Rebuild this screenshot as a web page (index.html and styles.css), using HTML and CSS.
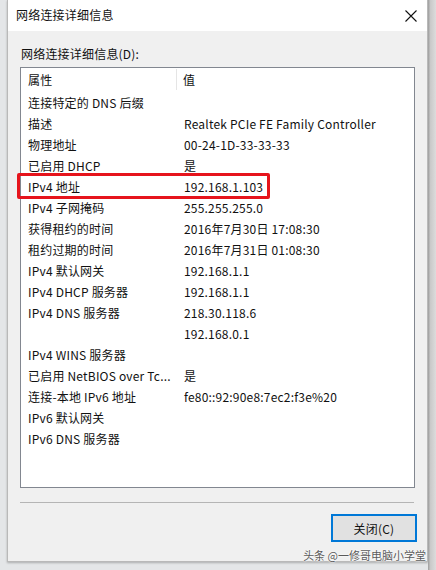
FILE: index.html
```html
<!DOCTYPE html>
<html lang="zh-CN">
<head>
<meta charset="utf-8">
<title>网络连接详细信息</title>
<link rel="stylesheet" href="styles.css">
</head>
<body>
<div class="desk">
  <div class="dialog">
    <div class="titlebar">
      <span class="title">网络连接详细信息</span>
      <svg class="close" width="12" height="12" viewBox="0 0 12 12"><path d="M0.5 0.5 L11.5 11.5 M11.5 0.5 L0.5 11.5" stroke="#111" stroke-width="1.1" fill="none"/></svg>
    </div>
    <div class="content">
      <div class="label">网络连接详细信息(D):</div>
      <div class="list">
        <div class="head">
          <div class="hcell c1">属性</div>
          <div class="hcell c2">值</div>
        </div>
        <div class="row"><span class="c1">连接特定的 DNS 后缀</span><span class="c2"></span></div>
        <div class="row"><span class="c1">描述</span><span class="c2">Realtek PCIe FE Family Controller</span></div>
        <div class="row"><span class="c1">物理地址</span><span class="c2">00-24-1D-33-33-33</span></div>
        <div class="row"><span class="c1">已启用 DHCP</span><span class="c2">是</span></div>
        <div class="row"><span class="c1">IPv4 地址</span><span class="c2">192.168.1.103</span></div>
        <div class="row"><span class="c1">IPv4 子网掩码</span><span class="c2">255.255.255.0</span></div>
        <div class="row"><span class="c1">获得租约的时间</span><span class="c2">2016年7月30日 17:08:30</span></div>
        <div class="row"><span class="c1">租约过期的时间</span><span class="c2">2016年7月31日 01:08:30</span></div>
        <div class="row"><span class="c1">IPv4 默认网关</span><span class="c2">192.168.1.1</span></div>
        <div class="row"><span class="c1">IPv4 DHCP 服务器</span><span class="c2">192.168.1.1</span></div>
        <div class="row"><span class="c1">IPv4 DNS 服务器</span><span class="c2">218.30.118.6</span></div>
        <div class="row"><span class="c1"></span><span class="c2">192.168.0.1</span></div>
        <div class="row"><span class="c1">IPv4 WINS 服务器</span><span class="c2"></span></div>
        <div class="row"><span class="c1">已启用 NetBIOS over Tc...</span><span class="c2">是</span></div>
        <div class="row"><span class="c1">连接-本地 IPv6 地址</span><span class="c2">fe80::92:90e8:7ec2:f3e%20</span></div>
        <div class="row"><span class="c1">IPv6 默认网关</span><span class="c2"></span></div>
        <div class="row"><span class="c1">IPv6 DNS 服务器</span><span class="c2"></span></div>
        <div class="highlight"></div>
      </div>
      <div class="sep"></div>
      <div class="actions">
        <button class="btn">关闭(C)</button>
      </div>
    </div>
  </div>
  <div class="shadow"></div>
  <div class="watermark">头条 @一修哥电脑小学堂</div>
</div>
</body>
</html>
```
FILE: styles.css
```css
html, body {
  margin: 0;
  padding: 0;
}
body {
  width: 436px;
  height: 570px;
  overflow: hidden;
  background: #e4e6e8;
  font-family: "Noto Sans CJK SC", "Noto Sans", sans-serif;
  font-size: 12px;
  color: #111;
}
.desk {
  position: relative;
  display: flex;
  padding-left: 7px;
  height: 570px;
  box-sizing: border-box;
}
.dialog {
  width: 421px;
  height: 562px;
  background: #f0f0f0;
  border: 1px solid #b9b9b9;
  border-top: none;
  box-sizing: border-box;
  display: flex;
  flex-direction: column;
  box-shadow: 0 1px 2px rgba(0,0,0,0.25);
}
.shadow {
  width: 8px;
  height: 570px;
  background: linear-gradient(to right, #9c9c9c, #c9c9c9 30%, #dcdcdc);
}
.titlebar {
  height: 31px;
  background: #fff;
  display: flex;
  align-items: center;
  justify-content: space-between;
  padding: 0 9px 0 8px;
}
.title {
  font-size: 12px;
  line-height: 14px;
  margin-top: -1px;
  letter-spacing: 0.2px;
}
.close {
  margin-right: 1px;
  margin-top: 1px;
}
.content {
  flex: 1;
  display: flex;
  flex-direction: column;
  padding: 15px 11px 0 12px;
}
.label {
  line-height: 16px;
  padding-left: 1px;
  letter-spacing: 0.2px;
}
.list {
  position: relative;
  margin-top: 5px;
  width: 395px;
  height: 421px;
  box-sizing: border-box;
  background: #fff;
  border: 1px solid #828790;
  letter-spacing: 0.2px;
}
.head {
  display: flex;
  height: 24px;
  line-height: 24px;
}
.hcell {
  box-sizing: border-box;
}
.head .c1 {
  width: 156px;
  padding-left: 7px;
  border-right: 1px solid #e5e5e5;
  height: 21px;
  margin-top: 1px;
  line-height: 22px;
}
.head .c2 {
  padding-left: 6px;
}
.row {
  display: flex;
  height: 21px;
  line-height: 21px;
  white-space: nowrap;
}
.row .c1 {
  box-sizing: border-box;
  width: 163px;
  padding-left: 7px;
  flex: none;
}
.highlight {
  position: absolute;
  left: -4px;
  top: 105px;
  width: 253px;
  height: 26px;
  box-sizing: border-box;
  border: 3px solid #e6141c;
  border-radius: 2px;
}
.sep {
  margin-top: 14px;
  margin-right: 2px;
  height: 1px;
  background: #b5b5b5;
}
.actions {
  display: flex;
  justify-content: flex-end;
  padding-top: 11px;
}
.btn {
  width: 86px;
  height: 28px;
  margin-right: -1px;
  background: #e1e1e1;
  border: 2px solid #0078d7;
  font-family: inherit;
  font-size: 12px;
  color: #111;
  padding: 0;
  letter-spacing: 0.2px;
}
.watermark {
  position: absolute;
  right: 10px;
  top: 547px;
  font-size: 11px;
  line-height: 16px;
  color: #5a5a5a;
  text-shadow: 0 0 2px #fff, 0 0 2px #fff;
}
```
